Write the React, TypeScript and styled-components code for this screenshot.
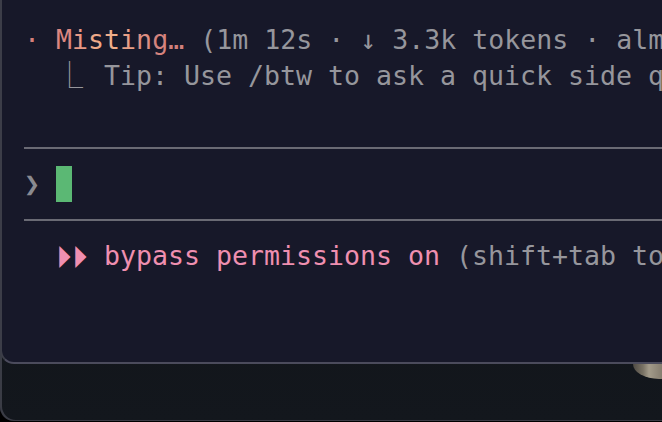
import React from "react";
import styled, { createGlobalStyle } from "styled-components";

const GlobalStyle = createGlobalStyle`
  html, body {
    margin: 0;
    padding: 0;
    background: #000;
    overflow: hidden;
  }
`;

const Window = styled.div`
  width: 662px;
  height: 421px;
  display: flex;
  flex-direction: column;
  background: linear-gradient(180deg, #0f1114 0%, #13171d 100%);
  border-bottom-left-radius: 14px;
  box-shadow: inset 2px -1px 0 #3a3c45;
  overflow: hidden;
`;

const Terminal = styled.div`
  box-sizing: border-box;
  height: 364px;
  flex: none;
  background: #171829;
  border-left: 2px solid #3c3d48;
  border-bottom: 2px solid #4b4b5c;
  border-bottom-left-radius: 14px;
  padding: 22px 0 0 22px;
  overflow: hidden;
  font-family: "DejaVu Sans Mono", "Liberation Mono", monospace;
  font-size: 26.58px;
  line-height: 36px;
  color: #96969c;
`;

const Row = styled.div`
  height: 36px;
  white-space: pre;
  overflow: hidden;
`;

const SepRow = styled.div`
  height: 36px;
  display: flex;
  align-items: center;
`;

const Rule = styled.div`
  flex: 1;
  height: 2px;
  background: #6a6a74;
`;

const Tone = styled.span<{ $c: string }>`
  color: ${(p) => p.$c};
`;

const Cell = styled.span<{ $size?: number }>`
  display: inline-block;
  width: 16px;
  height: 36px;
  vertical-align: top;
  overflow: visible;
  white-space: pre;
  font-size: ${(p) => p.$size ?? 26.58}px;
`;

const Cursor = styled.span`
  display: inline-block;
  width: 16px;
  height: 36px;
  vertical-align: top;
  background: #5bb874;
`;

const Prompt = styled.span`
  color: #8a8a90;
`;

const Footer = styled.div`
  flex: 1;
  display: flex;
  justify-content: flex-end;
  align-items: flex-start;
`;

const Blob = styled.div`
  width: 29px;
  height: 15px;
  border-bottom-left-radius: 26px 15px;
  background: linear-gradient(90deg, #4e4a44 0%, #7a7365 35%, #a39b8a 55%, #857d6f 100%);
  filter: blur(0.5px);
`;

const shimmer = [
  { ch: "M", c: "#db8680" },
  { ch: "i", c: "#e69884" },
  { ch: "s", c: "#eea988" },
  { ch: "t", c: "#f0ae8a" },
  { ch: "i", c: "#e89f86" },
  { ch: "n", c: "#dc8e82" },
  { ch: "g", c: "#d4837e" },
  { ch: "…", c: "#d2807c" },
];

export default function App() {
  return (
    <>
      <GlobalStyle />
      <Window>
        <Terminal>
          <Row>
            <Tone $c="#d67f7a">·</Tone>{" "}
            {shimmer.map((s, i) => (
              <Tone key={i} $c={s.c}>
                {s.ch}
              </Tone>
            ))}
            {" (1m 12s · ↓ 3.3k tokens · almost done thinking)"}
          </Row>
          <Row>
            {"  "}
            <Cell>⎿</Cell>
            {"  Tip: Use /btw to ask a quick side question without interrupting"}
          </Row>
          <Row />
          <SepRow>
            <Rule />
          </SepRow>
          <Row>
            <Prompt>❯</Prompt>{" "}
            <Cursor />
          </Row>
          <SepRow>
            <Rule />
          </SepRow>
          <Row>
            {"  "}
            <Tone $c="#ef8fb0">
              <Cell $size={31}>⏵</Cell>
              <Cell $size={31}>⏵</Cell> bypass permissions on
            </Tone>
            {" (shift+tab to cycle)"}
          </Row>
        </Terminal>
        <Footer>
          <Blob />
        </Footer>
      </Window>
    </>
  );
}
